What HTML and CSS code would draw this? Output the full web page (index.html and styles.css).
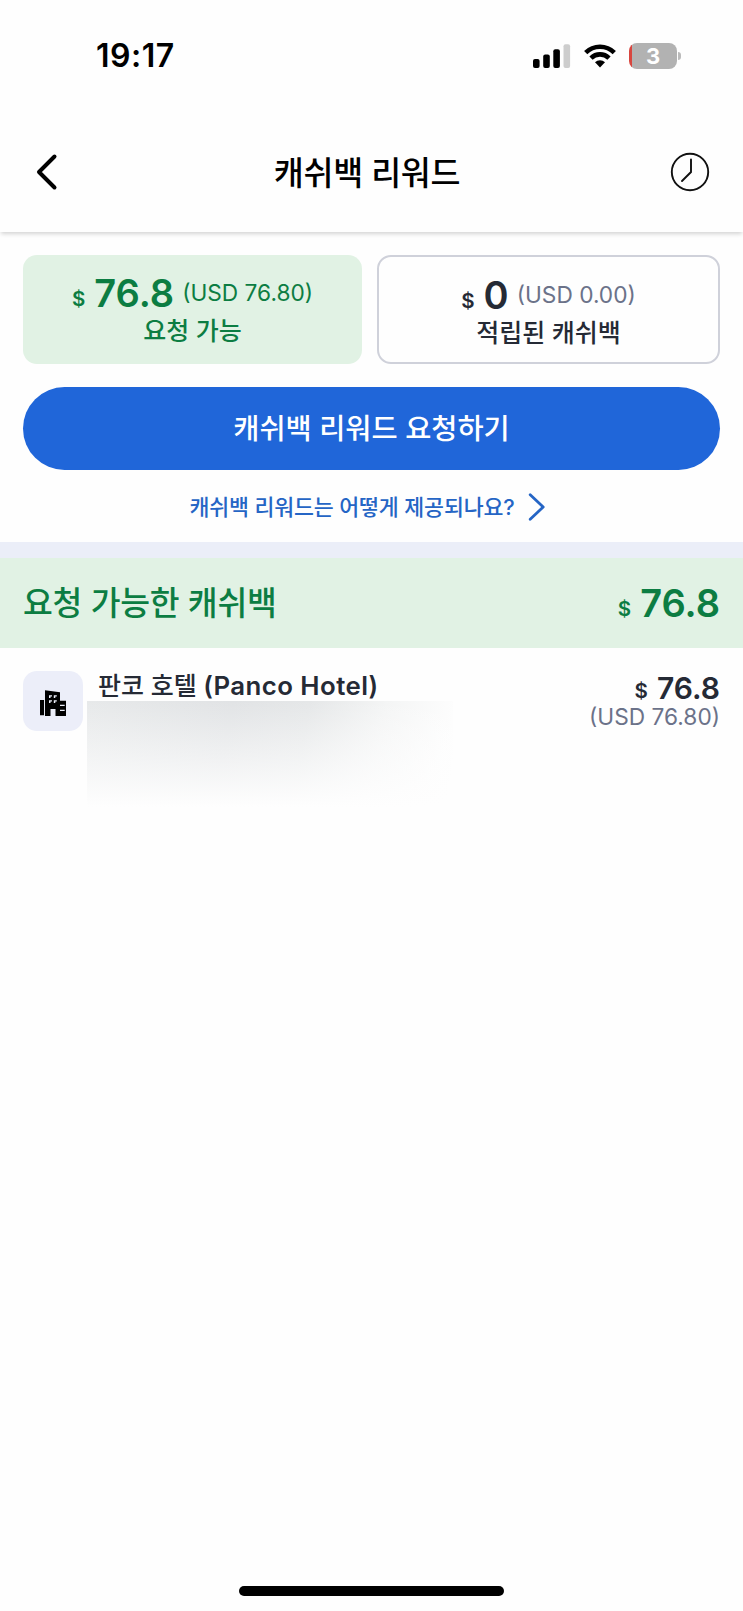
FILE: index.html
```html
<!DOCTYPE html>
<html lang="ko">
<head>
<meta charset="utf-8">
<title>캐쉬백 리워드</title>
<link rel="stylesheet" href="styles.css">
</head>
<body>
<div class="screen">
  <div class="status">
    <span class="time">19:17</span>
    <div class="status-icons">
      <svg class="signal" width="38" height="24" viewBox="0 0 38 24"><rect x="0" y="15" width="6.6" height="9" rx="2"/><rect x="10.2" y="10.5" width="6.6" height="13.5" rx="2"/><rect x="20.3" y="5.3" width="6.6" height="18.7" rx="2"/><rect x="30.5" y="0.3" width="6.6" height="23.7" rx="2" fill="#cdcdcd"/></svg>
      <svg class="wifi" width="32" height="24" viewBox="0 0 32 24"><g fill="none" stroke="#000" stroke-width="4.6"><path d="M1.7 8.6a20.3 20.3 0 0 1 28.6 0"/><path d="M7 14.1a12.8 12.8 0 0 1 18 0"/></g><path d="M11 18.3a7.4 7.4 0 0 1 10 0L16 23.4z"/></svg>
      <div class="battery"><span>3</span></div><i class="nub"></i>
    </div>
  </div>
  <header class="header">
    <svg class="back" width="22" height="38" viewBox="0 0 22 38"><path d="M18.5 3.5 3 19l15.5 15.5" fill="none" stroke="#000" stroke-width="4" stroke-linecap="round" stroke-linejoin="round"/></svg>
    <h1>캐쉬백 리워드</h1>
    <svg class="clock" width="40" height="40" viewBox="0 0 40 40"><g fill="none" stroke="#111" stroke-width="1.9" stroke-linecap="round"><circle cx="20" cy="20" r="18.2"/><path d="M21 7.5V20l-9 9"/></g></svg>
  </header>
  <section class="summary">
    <div class="cards">
      <div class="card card-green">
        <div class="amount"><span class="cur">$</span><span class="big">76.8</span><span class="usd">(USD 76.80)</span></div>
        <div class="label">요청 가능</div>
      </div>
      <div class="card card-line">
        <div class="amount"><span class="cur">$</span><span class="big">0</span><span class="usd">(USD 0.00)</span></div>
        <div class="label">적립된 캐쉬백</div>
      </div>
    </div>
    <button class="request">캐쉬백 리워드 요청하기</button>
    <a class="how"><span>캐쉬백 리워드는 어떻게 제공되나요?</span><svg width="18" height="28" viewBox="0 0 18 28"><path d="M2.2 1.8 15.2 14 2.2 26.2" fill="none" stroke="#2565c5" stroke-width="2.8" stroke-linecap="round" stroke-linejoin="round"/></svg></a>
  </section>
  <div class="divider"></div>
  <div class="group">
    <h2>요청 가능한 캐쉬백</h2>
    <div class="amount"><span class="cur">$</span><span class="big">76.8</span></div>
  </div>
  <div class="item">
    <div class="tile"><svg width="26" height="26" viewBox="0 0 26 26"><path fill="#000" d="M0 10h4.2v15.3H0zM5 .2 20 2.3v8.5h6V26H15.5v-7h-5v7H5z"/><g fill="#eceef9"><path d="M4.1 9h.8v17h-.8zM20 14.8h4.7v1.2H20zM20 19.8h4.7V21H20z"/><path d="M9 5.2h3v1.3h-1.5v1.5H9zM13.8 5.2h3v1.3h-1.5v1.5h-1.5zM9 10.2h3v1.3h-1.5V13H9zM13.8 10.2h3v1.3h-1.5V13h-1.5z"/></g></svg></div>
    <div class="detail">
      <div class="hotel">판코 호텔 <span class="latin">(Panco Hotel)</span></div>
      <div class="redacted"></div>
    </div>
    <div class="price">
      <div class="amount"><span class="cur">$</span><span class="mid">76.8</span></div>
      <div class="usd">(USD 76.80)</div>
    </div>
  </div>
  <div class="home"></div>
</div>
</body>
</html>
```
FILE: styles.css
```css
* { box-sizing: border-box; }
body { margin: 0; background: #fefefe; font-family: Inter, "Noto Sans CJK KR", sans-serif; color: #252a35; }
h1, h2 { margin: 0; }
.screen { width: 743px; height: 1611px; display: flex; flex-direction: column; overflow: hidden; }
.status { height: 112px; padding: 0 62px 0 96px; display: flex; justify-content: space-between; }
.time { line-height: 112px; font-size: 32px; font-weight: 600; color: #000; letter-spacing: 0.5px; }
.status-icons { height: 111px; display: flex; align-items: center; }
.wifi { margin: 0 13px 0 13px; }
.battery { width: 48px; height: 26px; border-radius: 8px; background: linear-gradient(90deg, #d8463f 2.5px, #b2b2b2 2.5px); color: #fff; font-size: 22px; font-weight: 700; line-height: 26px; text-align: center; }
.nub { width: 3px; height: 8px; margin-left: 1px; border-radius: 0 3px 3px 0; background: #bbb; }
.header { height: 120px; padding: 0 33px 0 36px; display: flex; align-items: center; justify-content: space-between; box-shadow: 0 3px 4px -1px rgba(0, 0, 0, .17); }
h1 { font-size: 32.6px; font-weight: 500; line-height: 40px; color: #000; margin-left: 6px; letter-spacing: -0.3px; padding-top: 2px; }
.summary { height: 310px; padding: 23px 23px 0; }
.cards { display: grid; grid-template-columns: 339px 343px; justify-content: space-between; }
.card { height: 109px; border-radius: 14px; text-align: center; padding-top: 16px; }
.card-green { background: #e1f2e4; color: #0c7d42; }
.card-line { border: 2px solid #cfd1da; }
.amount { display: flex; justify-content: center; align-items: baseline; line-height: 44px; white-space: nowrap; font-weight: 600; }
.card .amount { height: 45px; }
.cur { position: relative; top: -1px; font-size: 20.5px; font-weight: 600; }
.big { font-size: 38px; margin-left: 9px; }
.mid { font-size: 30px; margin-left: 9px; }
.usd { font-size: 22.7px; font-weight: 400; color: #6b7289; }
.amount .usd { position: relative; top: -6px; margin-left: 8px; }
.card-green .usd { color: inherit; }
.label { font-size: 25px; font-weight: 500; line-height: 30px; }
.request { display: block; width: 697px; height: 83px; margin-top: 23px; padding: 0; border: 0; border-radius: 42px; background: #2066d9; color: #fff; font: 500 28.4px/84px Inter, "Noto Sans CJK KR", sans-serif; }
.how { height: 72px; display: flex; align-items: center; justify-content: center; gap: 13px; font-size: 21.7px; letter-spacing: -0.15px; font-weight: 500; color: #2565c5; padding: 1px 8px 0 0; }
.how span { padding-bottom: 3px; }
.divider { height: 16px; background: #ebeef8; }
.group { height: 90px; padding: 0 23px; display: flex; align-items: center; justify-content: space-between; background: #e1f2e4; color: #0c7d42; }
h2 { font-size: 32.4px; font-weight: 500; line-height: 40px; letter-spacing: -0.2px; padding-top: 2px; }
.group .amount { height: 45px; }
.item { display: flex; padding: 23px 23px 0; align-items: flex-start; }
.tile { width: 60px; height: 60px; border-radius: 14px; background: #eceef9; display: flex; align-items: center; justify-content: center; padding: 3px 0 0 0; }
.detail { margin-left: 4px; width: 366px; }
.hotel { height: 30px; padding-left: 11px; font-size: 25px; font-weight: 500; line-height: 30px; white-space: nowrap; }
.latin { font-weight: 600; font-size: 25.8px; letter-spacing: 0.45px; }
.redacted { height: 106px; background: linear-gradient(180deg, transparent, #fefefe), linear-gradient(100deg, #e7e9ea, #e1e3e5 38%, #e5e7e8 58%, #f4f5f5 78%, #fefefe 98%); }
.price { flex: 1; text-align: right; }
.price .amount { justify-content: flex-end; line-height: 34px; height: 34px; }
.price .usd { line-height: 24px; }
.home { width: 265px; height: 10px; margin: auto auto 15px; border-radius: 5px; background: #000; }
```
